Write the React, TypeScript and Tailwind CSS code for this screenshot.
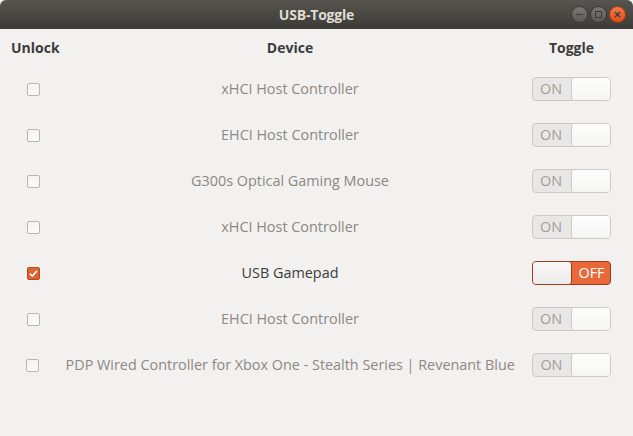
import React, { useState } from 'react';

type Device = { name: string; unlocked: boolean; on: boolean };

const initialDevices: Device[] = [
  { name: 'xHCI Host Controller', unlocked: false, on: true },
  { name: 'EHCI Host Controller', unlocked: false, on: true },
  { name: 'G300s Optical Gaming Mouse', unlocked: false, on: true },
  { name: 'xHCI Host Controller', unlocked: false, on: true },
  { name: 'USB Gamepad', unlocked: true, on: false },
  { name: 'EHCI Host Controller', unlocked: false, on: true },
  { name: 'PDP Wired Controller for Xbox One - Stealth Series | Revenant Blue', unlocked: false, on: true },
];

function Checkbox({ checked, onChange }: { checked: boolean; onChange: () => void }) {
  if (checked) {
    return (
      <button
        onClick={onChange}
        className="w-[13px] h-[13px] rounded-[2px] bg-[#e0622f] border border-[#b44a1f] flex items-center justify-center"
      >
        <svg width="9" height="9" viewBox="0 0 9 9">
          <path d="M1 4.8 L3.4 7 L8 1.8" stroke="#fff" strokeWidth="1.7" fill="none" />
        </svg>
      </button>
    );
  }
  return (
    <button
      onClick={onChange}
      className="w-[13px] h-[13px] rounded-[2px] bg-gradient-to-b from-[#f4f4f4] to-[#fbfbfb] border border-[#b9b6b1]"
    />
  );
}

function Toggle({ on, onChange }: { on: boolean; onChange: () => void }) {
  if (!on) {
    return (
      <button
        onClick={onChange}
        className="w-[79px] h-[24px] rounded-[4px] bg-[#e9683a] border border-[#9c3e18] flex items-stretch"
      >
        <span className="w-[39px] rounded-[3px] bg-gradient-to-b from-[#f8f8f7] to-[#ecebea] border-r border-[#9c3e18]" />
        <span className="flex-1 flex items-center justify-center text-white text-[14.4px] pl-[1px]">OFF</span>
      </button>
    );
  }
  return (
    <button
      onClick={onChange}
      className="w-[79px] h-[24px] rounded-[4px] bg-[#e8e7e5] border border-[#cdcac6] flex items-stretch"
    >
      <span className="flex-1 flex items-center justify-center text-[#a09e9a] text-[14.4px] pr-[2px]">ON</span>
      <span className="w-[39px] rounded-[3px] bg-gradient-to-b from-[#fdfdfd] to-[#f5f5f4] border-l border-[#cdcac6]" />
    </button>
  );
}

export default function App() {
  const [devices, setDevices] = useState(initialDevices);

  const toggleUnlock = (i: number) =>
    setDevices((d) => d.map((x, j) => (j === i ? { ...x, unlocked: !x.unlocked } : x)));
  const toggleOn = (i: number) =>
    setDevices((d) => d.map((x, j) => (j === i && x.unlocked ? { ...x, on: !x.on } : x)));

  return (
    <div
      className="w-[633px] h-[436px] bg-[#f2f1f0] flex flex-col overflow-hidden"
      style={{ fontFamily: '"Open Sans", "DejaVu Sans", sans-serif' }}
    >
      {/* title bar */}
      <div className="h-[29px] rounded-t-[6px] bg-gradient-to-b from-[#56554f] to-[#3c3b37] flex items-center relative shrink-0">
        <div className="flex-1 text-center text-[#dfdbd2] font-bold text-[14px] tracking-[-0.2px]">USB-Toggle</div>
        <div className="absolute right-[7px] top-[6px] flex gap-[2px]">
          <span className="w-[17px] h-[17px] rounded-full bg-gradient-to-b from-[#7a7975] to-[#5a5955] border border-[#3a3935] flex items-center justify-center">
            <span className="w-[7px] h-[1.5px] bg-[#3c3b37]" />
          </span>
          <span className="w-[17px] h-[17px] rounded-full bg-gradient-to-b from-[#7a7975] to-[#5a5955] border border-[#3a3935] flex items-center justify-center">
            <span className="w-[7px] h-[7px] border border-[#3c3b37]" />
          </span>
          <span className="w-[17px] h-[17px] rounded-full bg-gradient-to-b from-[#f27a4a] to-[#de4a17] border border-[#a8380f] flex items-center justify-center">
            <svg width="7" height="7" viewBox="0 0 7 7">
              <path d="M1 1 L6 6 M6 1 L1 6" stroke="#3c3b37" strokeWidth="1.4" />
            </svg>
          </span>
        </div>
      </div>

      {/* header */}
      <div className="flex items-center h-[37px] text-[#3c3c3c] font-bold text-[14px] shrink-0">
        <div className="w-[66px] pl-[11px]">Unlock</div>
        <div className="flex-1 text-center">Device</div>
        <div className="w-[119px] text-center pr-[4px]">Toggle</div>
      </div>

      {/* rows */}
      <div className="flex flex-col">
        {devices.map((d, i) => (
          <div key={i} className="flex items-center h-[46px]">
            <div className="w-[66px] flex justify-center">
              <Checkbox checked={d.unlocked} onChange={() => toggleUnlock(i)} />
            </div>
            <div
              className={`flex-1 text-center text-[14.4px] whitespace-nowrap ${d.unlocked ? 'text-[#3c3c3c]' : 'text-[#8d8882]'}`}
            >
              {d.name}
            </div>
            <div className="w-[119px] flex justify-center pr-[4px]">
              <Toggle on={d.on} onChange={() => toggleOn(i)} />
            </div>
          </div>
        ))}
      </div>
    </div>
  );
}
